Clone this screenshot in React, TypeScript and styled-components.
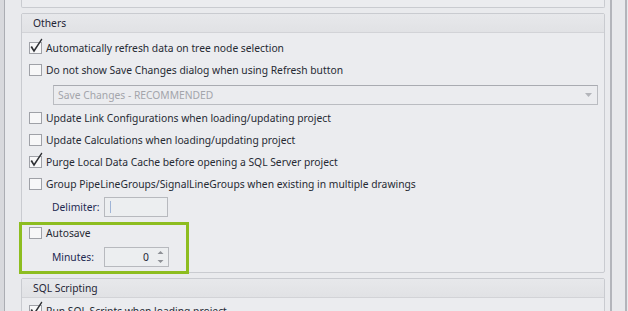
import React from "react";
import styled, { createGlobalStyle } from "styled-components";

const Global = createGlobalStyle`
  html, body { margin: 0; padding: 0; background: #e9eaed; }
  body {
    font-family: "Noto Sans", "Open Sans", sans-serif;
    font-size: 10.3px;
    color: #262a33;
  }
`;

const Frame = styled.div`
  display: flex;
  width: 628px;
  height: 311px;
  overflow: hidden;
  background: #e9eaed;
`;

const LeftRail = styled.div`
  flex: none;
  width: 4px;
  background: #d8d9dd;
  border-right: 1px solid #abadb3;
`;

const Viewport = styled.div`
  flex: none;
  width: 605px;
  box-sizing: border-box;
  padding-left: 16px;
  display: flex;
  flex-direction: column;
  gap: 5px;
`;

const ScrollTrack = styled.div`
  flex: none;
  width: 17px;
  box-sizing: border-box;
  background: #e8e9ec;
  border-left: 2px solid #b3b5bb;
  border-right: 2px solid #b3b5bb;
`;

const PanelTail = styled.div`
  flex: none;
  width: 584px;
  height: 8px;
  box-sizing: border-box;
  background: #ebecef;
  border: 1px solid #c9cbd0;
  border-top: none;
  border-radius: 0 0 2px 2px;
`;

const Group = styled.section`
  flex: none;
  width: 584px;
  box-sizing: border-box;
  background: #ebecef;
  border: 1px solid #c9cbd0;
  border-radius: 2px;
`;

const GroupHeader = styled.header`
  height: 18px;
  display: flex;
  align-items: center;
  padding-left: 11px;
  background: linear-gradient(#e7e8eb, #e1e2e5);
  border-bottom: 1px solid #d2d3d7;
  color: #1f2536;
`;

const GroupBody = styled.div<{ $top?: number }>`
  display: flex;
  flex-direction: column;
  padding: ${(p) => p.$top ?? 4}px 0 5px 0;
`;

const CheckRow = styled.label`
  height: 22px;
  display: flex;
  align-items: center;
  gap: 4px;
  padding-left: 7px;
  white-space: nowrap;
`;

const Box = styled.span`
  position: relative;
  flex: none;
  width: 13px;
  height: 12px;
  box-sizing: border-box;
  background: #f7f7f8;
  border: 1px solid #9fa1a7;
`;

const CheckMark = styled.svg`
  position: absolute;
  left: -1px;
  top: -1px;
  overflow: visible;
`;

const Combo = styled.div`
  height: 20px;
  margin: 4px 6px 2px 31px;
  box-sizing: border-box;
  display: flex;
  align-items: center;
  justify-content: space-between;
  padding: 0 5px 0 4px;
  border: 1px solid #babcc1;
  border-top-color: #a9abb1;
  color: #a3a5ab;
`;

const FieldRow = styled.div<{ $top: number }>`
  display: flex;
  align-items: center;
  margin-top: ${(p) => p.$top}px;
  padding-left: 30px;
  height: 20px;
`;

const FieldLabel = styled.span`
  width: 52px;
  flex: none;
  color: #1f2a52;
`;

const TextBox = styled.div<{ $w: number }>`
  width: ${(p) => p.$w}px;
  height: 20px;
  box-sizing: border-box;
  border: 1px solid #b7b9be;
  background: #eceef0;
  display: flex;
  align-items: center;
  position: relative;
`;

const Caret = styled.span`
  width: 1px;
  height: 12px;
  margin-left: 5px;
  background: #9fb4d6;
`;

const SpinValue = styled.span`
  flex: 1;
  text-align: right;
  padding-right: 19px;
  color: #1f2536;
`;

const SpinButtons = styled.svg`
  position: absolute;
  right: 4px;
  top: 2px;
`;

const AutosaveBlock = styled.div`
  position: relative;
  margin-top: 5px;
  &::after {
    content: "";
    position: absolute;
    left: -3px;
    top: 0;
    width: 170px;
    height: 52px;
    box-sizing: border-box;
    border: 3px solid #8dbd20;
    pointer-events: none;
  }
`;

function Check({ checked, children }: { checked?: boolean; children: React.ReactNode }) {
  return (
    <CheckRow>
      <Box>
        {checked && (
          <CheckMark width="13" height="12" viewBox="0 0 13 12">
            <polygon points="1.5,5 3,4 5,7.6 12.4,-3.6 13.4,-2.6 5,10.6" fill="#2d2f33" />
          </CheckMark>
        )}
      </Box>
      <span>{children}</span>
    </CheckRow>
  );
}

export default function App() {
  return (
    <>
      <Global />
      <Frame>
        <LeftRail />
        <Viewport>
          <PanelTail />
          <Group>
            <GroupHeader>Others</GroupHeader>
            <GroupBody>
              <Check checked>Automatically refresh data on tree node selection</Check>
              <Check>Do not show Save Changes dialog when using Refresh button</Check>
              <Combo>
                <span>Save Changes - RECOMMENDED</span>
                <svg width="7" height="4" viewBox="0 0 7 4">
                  <polygon points="0,0 7,0 3.5,4" fill="#b3b5ba" />
                </svg>
              </Combo>
              <Check>Update Link Configurations when loading/updating project</Check>
              <Check>Update Calculations when loading/updating project</Check>
              <Check checked>Purge Local Data Cache before opening a SQL Server project</Check>
              <Check>Group PipeLineGroups/SignalLineGroups when existing in multiple drawings</Check>
              <FieldRow $top={2}>
                <FieldLabel>Delimiter:</FieldLabel>
                <TextBox $w={64}>
                  <Caret />
                </TextBox>
              </FieldRow>
              <AutosaveBlock>
                <Check>Autosave</Check>
                <FieldRow $top={3}>
                  <FieldLabel>Minutes:</FieldLabel>
                  <TextBox $w={65}>
                    <SpinValue>0</SpinValue>
                    <SpinButtons width="7" height="14" viewBox="0 0 7 14">
                      <polygon points="0.5,4 6.5,4 3.5,1" fill="#8e9096" />
                      <polygon points="0.5,10 6.5,10 3.5,13" fill="#8e9096" />
                    </SpinButtons>
                  </TextBox>
                </FieldRow>
              </AutosaveBlock>
            </GroupBody>
          </Group>
          <Group>
            <GroupHeader>SQL Scripting</GroupHeader>
            <GroupBody $top={2}>
              <Check checked>Run SQL Scripts when loading project</Check>
            </GroupBody>
          </Group>
        </Viewport>
        <ScrollTrack />
      </Frame>
    </>
  );
}
